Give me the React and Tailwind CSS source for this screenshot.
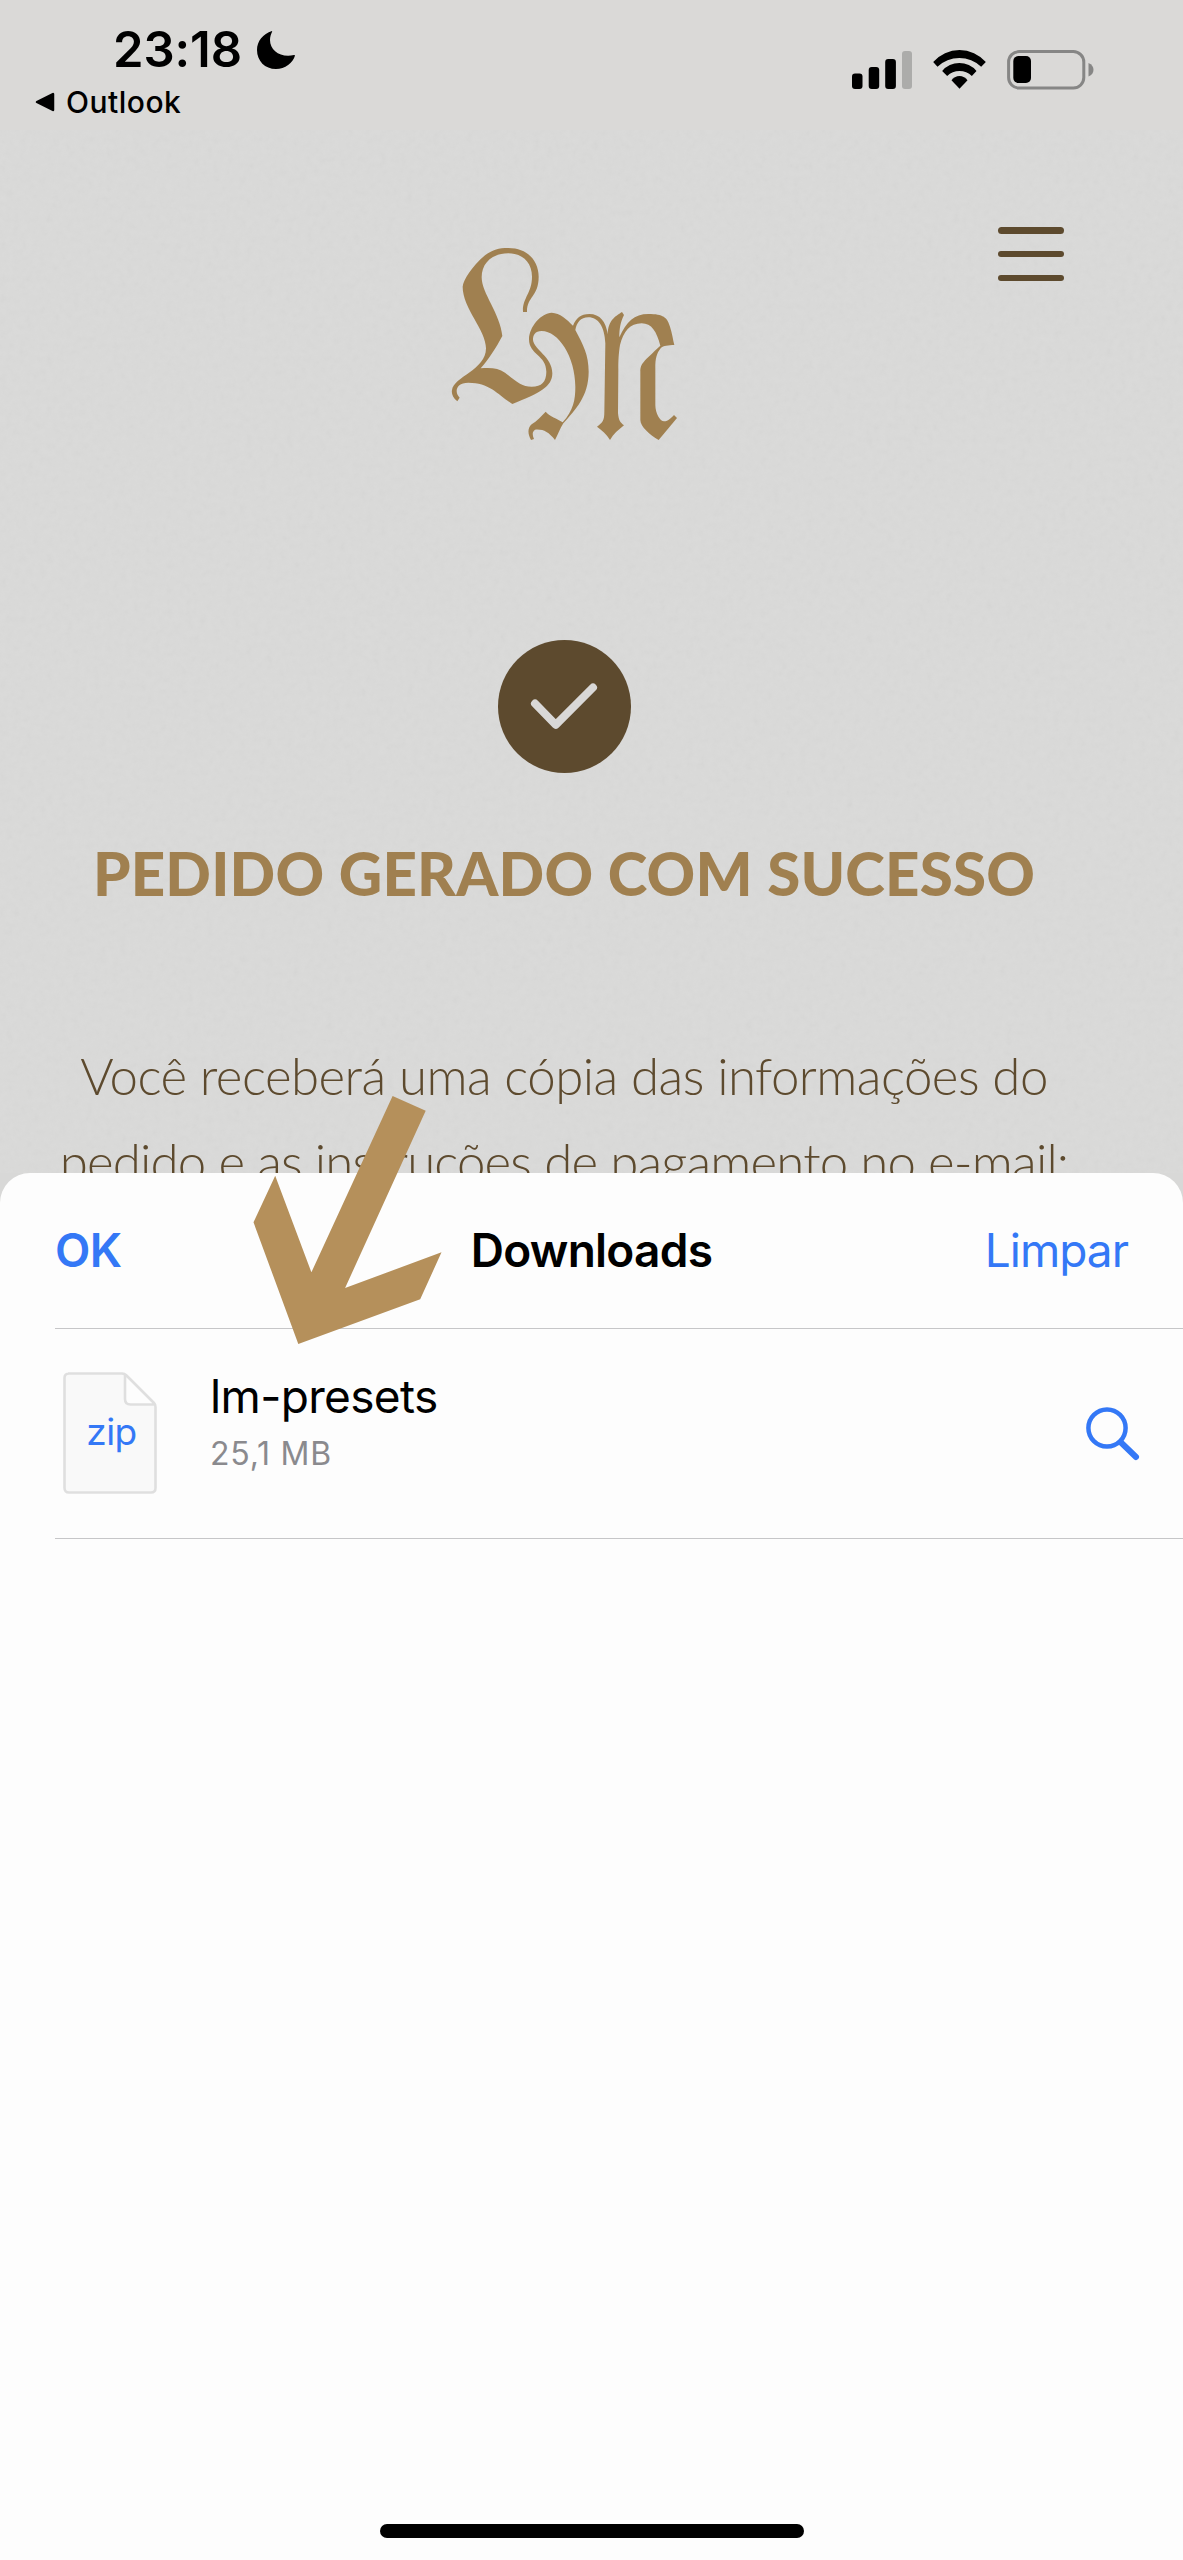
import React from "react";

const StatusBar = () => {
  return (
    <div className="relative flex h-[130px] justify-between bg-[#dad9d7] text-black">
      <div className="pl-[35px] pt-[20px]">
        <div className="flex h-[60px] items-center pl-[78px]">
          <span className="text-[49px] font-semibold leading-[60px] tracking-[-0.1px]">
            23:18
          </span>
          <svg viewBox="0 0 38 38" className="ml-[15px] h-[38px] w-[38px]">
            <path d="M15 0 C6 3 0 10 0 19 C0 30 8 38 19 38 C28 38 36 32 38 24.500 C38 24 37.300 23.800 37 24 C24 27 13 20 13 9 C13 6 14 3 15.200 0.600 Z" />
          </svg>
        </div>
        <div className="flex h-[44px] items-center">
          <svg viewBox="0 0 20 20" className="h-[20px] w-[20px]">
            <path
              d="M2 10 L18 2 V18 Z"
              stroke="#000"
              strokeWidth="2.500"
              strokeLinejoin="round"
            />
          </svg>
          <span className="ml-[11px] text-[30px] font-medium leading-[44px] tracking-[0.5px]">
            Outlook
          </span>
        </div>
      </div>

      <div className="flex h-[40px] pr-[89px] mt-[50px]">
        <svg viewBox="0 0 60 40" className="h-[40px] w-[60px]">
          <rect x="0" y="23.500" width="10.500" height="15.500" rx="3" />
          <rect x="16.700" y="17" width="10.500" height="22" rx="3" />
          <rect x="33.200" y="9" width="10.700" height="30" rx="3" />
          <rect x="50" y="1" width="10" height="38" rx="3" fill="#acacaa" />
        </svg>
        <svg viewBox="340 90 158 117" className="ml-[21px] h-[39px] w-[53px]">
          <path d="M340 126 A105 105 0 0 1 498 126 L484 140 A95 95 0 0 0 353 140 Z" />
          <path d="M367 153 A67 67 0 0 1 470 153 L456 168 A53 53 0 0 0 382 168 Z" />
          <path d="M395 181 A29 29 0 0 1 443 181 L419 206 Z" />
        </svg>
        <svg viewBox="0 0 87 40" className="ml-[21px] h-[40px] w-[87px]">
          <rect
            x="1.600"
            y="1.600"
            width="75.200"
            height="36.500"
            rx="10.500"
            fill="none"
            stroke="#868685"
            strokeWidth="3"
          />
          <rect x="6.300" y="6" width="17.700" height="27" rx="5" />
          <path d="M81.500 13 C85 14.500 86.500 17 86.500 19.700 C86.500 22.500 85 25 81.500 26.500 Z" fill="#868685" />
        </svg>
      </div>
    </div>
  );
};

// faint paper grain behind the page
const PaperTexture = () => {
  return (
    <svg className="absolute inset-0 h-full w-full opacity-[0.06]">
      <filter id="grain">
        <feTurbulence type="fractalNoise" baseFrequency="0.15" numOctaves="3" />
        <feColorMatrix type="saturate" values="0" />
      </filter>
      <rect width="100%" height="100%" filter="url(#grain)" />
    </svg>
  );
};

const Logo = () => {
  return (
    <svg viewBox="0 0 810 690" className="h-[230px] w-[270px]" fill="#a08050">
      <path d="M279 246 C276 205 306 190 306 140 C306 95 275 70 235 70 C185 70 155 100 155 142 C155 190 210 250 217 318 C200 350 175 390 152 415 C185 412 205 415 225 428 C260 455 275 470 305 470 C335 470 349 455 349 425 C349 375 297 375 297 328 C297 290 335 248 365 248 C390 249 410 268 429 287 C438 265 452 252 478 252 C510 252 528 275 533 313 C535 270 555 260 576 246 L582 255 C572 275 568 295 568 322 C590 275 612 252 655 252 C700 252 712 262 720 290 C727 312 729 330 733 345 C715 346 700 346 692 355 C680 370 676 385 676 415 L676 525 C676 550 690 574 702 574 C715 574 725 562 732 555 L741 564 L686 630 C660 615 631 590 631 570 L631 425 C631 400 640 395 691 347 C680 305 665 280 635 280 C600 280 580 305 570 345 C566 370 565 390 565 420 L564 550 C566 570 570 577 582 586 C565 600 550 612 540 630 C530 612 515 600 501 590 C518 577 523 572 523 545 L526 340 C524 290 505 262 475 262 C452 262 440 278 436 300 C460 345 476 375 476 425 C476 500 435 540 400 580 C390 596 384 613 375 630 C355 605 340 597 315 599 C306 605 307 615 312 627 L303 630 C293 612 292 595 305 583 C320 573 335 558 347 545 C360 560 380 565 398 577 C430 540 436 510 436 470 C436 380 385 303 335 303 C315 303 309 315 309 330 C312 360 367 380 367 430 C367 470 330 490 247 522 C205 495 180 458 115 458 C90 458 80 470 80 483 C80 492 84 497 89 503 L82 514 C68 502 64 490 66 480 C72 440 168 420 168 355 C168 300 98 235 98 170 C100 150 125 110 165 76 C190 58 205 54 235 54 C295 54 326 95 326 140 C326 200 290 200 291 246 Z" />
    </svg>
  );
};

const OrderPage = () => {
  return (
    <div className="relative h-[1043px] overflow-hidden bg-[#dadad9]">
      <PaperTexture />
      <div className="relative flex w-[1128px] flex-col items-center">
        <div className="flex h-[330px] w-full justify-between pl-[430px] pr-[64px]">
          <div className="pt-[100px]">
            <Logo />
          </div>
          <button className="flex h-[55px] w-[66px] flex-col justify-between pt-[1px] mt-[96px]">
            <span className="h-[6.500px] w-full rounded-full bg-[#5d4a2e]" />
            <span className="h-[6.500px] w-full rounded-full bg-[#5d4a2e]" />
            <span className="h-[6.500px] w-full rounded-full bg-[#5d4a2e]" />
          </button>
        </div>

        <svg viewBox="0 0 133 133" className="mt-[179.500px] h-[133px] w-[133px]">
          <circle cx="66.500" cy="66.500" r="66.500" fill="#5d4a2e" />
          <path
            d="M37 63.500 L57.700 84.800 L95 47.500"
            fill="none"
            stroke="#d9d8d7"
            strokeWidth="8"
            strokeLinecap="round"
            strokeLinejoin="round"
          />
        </svg>

        <h1 className="mt-[60.500px] whitespace-nowrap font-['Lato',sans-serif] text-[60px] font-black leading-[80px] tracking-[0.2px] text-[#a08050]">
          PEDIDO GERADO COM SUCESSO
        </h1>

        <p className="mt-[120px] whitespace-nowrap text-center font-['Lato',sans-serif] text-[51px] font-light leading-[86px] text-[#5d4a2e]">
          <span className="block tracking-[-0.55px]">Você receberá uma cópia das informações do</span>
          <span className="block tracking-[-0.85px]">pedido e as instruções de pagamento no e-mail:</span>
        </p>
      </div>
    </div>
  );
};

const FileIcon = () => {
  return (
    <div className="relative flex h-[122px] w-[94px] items-center justify-center">
      <svg viewBox="0 0 94 122" className="absolute inset-0 h-full w-full">
        <path
          d="M5 1.500 H59 C61 1.500 62 2 63.500 3.500 L91 31 C92 32 92.500 33 92.500 35 V116 C92.500 119 91 120.500 88 120.500 H6 C3 120.500 1.500 119 1.500 116 V6 C1.500 3 3 1.500 6 1.500 Z M62 3 V27 C62 31 64 32.500 67.500 32.500 H92"
          fill="#f9f9f9"
          stroke="#dfdfdf"
          strokeWidth="2.600"
        />
      </svg>
      <span className="relative pb-[4px] pl-[3px] text-[37px] leading-none tracking-[-0.5px] text-[#3478f6]">
        zip
      </span>
    </div>
  );
};

const DownloadsSheet = () => {
  return (
    <div className="relative flex h-[1387px] flex-col rounded-t-[30px] bg-[#fdfdfd]">
      <div className="grid h-[155px] grid-cols-3 items-center px-[55px] text-[46px]">
        <button className="text-left font-semibold tracking-[-0.5px] text-[#3478f6]">OK</button>
        <h2 className="text-center font-semibold tracking-[-0.75px] text-black">Downloads</h2>
        <button className="text-right tracking-[-1px] text-[#3478f6]">Limpar</button>
      </div>

      <div className="ml-[55px] flex h-[211px] border-y border-[#c6c6c8] pl-[8px] pr-[42px]">
        <div className="pt-[43px]">
          <FileIcon />
        </div>
        <div className="ml-[53px] flex-1 pt-[38px]">
          <p className="text-[46px] leading-[58px] tracking-[-0.65px] text-black">lm-presets</p>
          <p className="text-[32px] leading-[58px] tracking-[0.8px] text-[#8a8a8e]">25,1 MB</p>
        </div>
        <svg viewBox="0 0 56 56" className="mt-[77px] h-[56px] w-[56px]">
          <g fill="none" stroke="#3478f6" strokeLinecap="round">
            <circle cx="22" cy="22" r="18.600" strokeWidth="4.500" />
            <path d="M36 36.500 L51 51" strokeWidth="6" />
          </g>
        </svg>
      </div>

      <div className="mx-auto mt-auto mb-[22px] h-[14px] w-[424px] rounded-full bg-black" />
    </div>
  );
};

// points from the page down to the downloaded file
const Arrow = () => {
  return (
    <svg
      viewBox="0 0 190 250"
      className="absolute left-[252px] top-[1095px] h-[250px] w-[190px]"
      fill="#b5905b"
    >
      <polygon points="140.600,1 173.700,15.700 93.100,193 189.500,157.300 168.200,204.300 46.300,249 1.500,127.300 23.200,80.700 59.400,177.300" />
    </svg>
  );
};

export default function App() {
  return (
    <div className="relative h-[2560px] w-[1183px] overflow-hidden bg-[#d8d8d7] font-['Inter',sans-serif]">
      <StatusBar />
      <OrderPage />
      <DownloadsSheet />
      <Arrow />
    </div>
  );
}
